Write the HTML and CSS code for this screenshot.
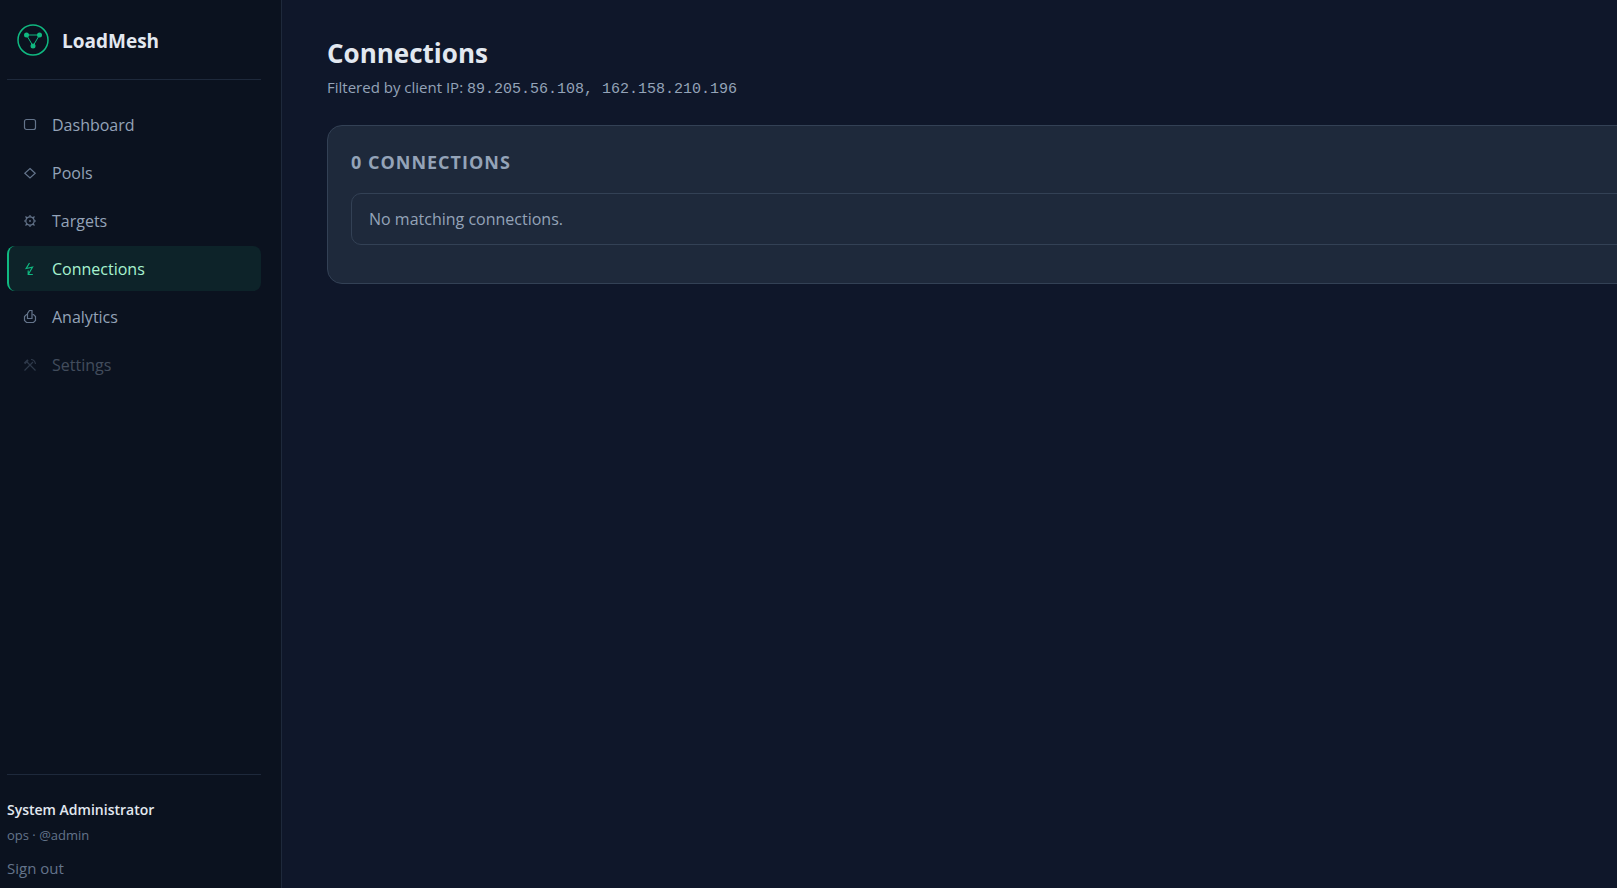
FILE: index.html
```
<!DOCTYPE html>
<html lang="en">
<head>
  <meta charset="UTF-8" />
  <meta name="viewport" content="width=device-width, initial-scale=1.0"/>
  <title>LoadMesh - Connections</title>
  <link rel="stylesheet" href="styles.css">
</head>
<body>
  <aside class="sidebar">
    <div class="brand">
      <svg class="brand-logo" viewBox="0 0 32 32" aria-hidden="true">
        <circle cx="16" cy="16" r="15" fill="none" stroke="currentColor" stroke-width="1.5"/>
        <path d="M9.5 11h13L16 22z" fill="none" stroke="currentColor" stroke-width="1"/>
        <circle cx="9.5" cy="11" r="2.5" fill="currentColor"/>
        <circle cx="22.5" cy="11" r="2.5" fill="currentColor"/>
        <circle cx="16" cy="22" r="2.5" fill="currentColor"/>
      </svg>
      <span class="brand-name">LoadMesh</span>
    </div>

    <nav class="nav">
      <a class="nav-item" href="#dashboard">
        <svg class="nav-icon" viewBox="0 0 14 14"><rect x="1.5" y="1.5" width="11" height="10" rx="2"/></svg>
        Dashboard
      </a>
      <a class="nav-item" href="#pools">
        <svg class="nav-icon" viewBox="0 0 14 14"><path d="M7 2.5l5.200 4.700L7 12 1.800 7.200z"/></svg>
        Pools
      </a>
      <a class="nav-item" href="#targets">
        <svg class="nav-icon" viewBox="0 0 14 14">
          <circle cx="7" cy="7" r="4.2"/>
          <path d="M7 1v1.800M7 11.200v1.800M1 7h1.800M11.200 7H13M2.500 2.500l1.500 1.500M10 10l1.500 1.500M2.500 11.500l1.500-1.500M10 4l1.500-1.500"/>
          <circle class="dot" cx="7" cy="7" r="0.900"/>
        </svg>
        Targets
      </a>
      <a class="nav-item active" href="#connections" aria-current="page">
        <svg class="nav-icon" viewBox="0 0 14 14"><path d="M6.500 1L3.200 6.500 9.500 5.200 5.500 12M9.800 12.500H5.200V8.500"/></svg>
        Connections
      </a>
      <a class="nav-item" href="#analytics">
        <svg class="nav-icon" viewBox="0 0 14 14"><path d="M4.500 4.500H3.500L1.500 6.500v4l2 2h7l2-2v-4l-2-2H9.500"/><path d="M4.500 8.500V3.500L6.500 .5h2.500v8z"/></svg>
        Analytics
      </a>
      <a class="nav-item disabled" aria-disabled="true">
        <svg class="nav-icon" viewBox="0 0 14 14"><path d="M4 4l8.500 8.500M10 4l-8.500 8.500M8 1.500c2 0 4 2 4.500 4.500"/><path class="head" d="M1.500 5.500l3.500-3.500"/></svg>
        Settings
      </a>
    </nav>

    <div class="user">
      <div class="user-name">System Administrator</div>
      <div class="user-role">ops · @admin</div>
      <button class="sign-out" type="button">Sign out</button>
    </div>
  </aside>

  <main class="content">
    <h1>Connections</h1>
    <p class="subtitle">Filtered by client IP: <code>89.205.56.108, 162.158.210.196</code></p>

    <section class="card">
      <h2>0 connections</h2>
      <div class="empty">No matching connections.</div>
    </section>
  </main>
</body>
</html>
```
FILE: styles.css
```
* { box-sizing: border-box; }
body {
  margin: 0;
  font-family: 'Segoe UI', 'Open Sans', sans-serif;
  font-size: 16px;
  line-height: 24px;
  background: #0f172a;
  color: #e2e8f0;
  display: flex;
  min-height: 100vh;
  overflow-x: hidden;
}
.sidebar {
  flex: 0 0 282px;
  display: flex;
  flex-direction: column;
  padding: 0 20px 8px 7px;
  background: #0b121f;
  border-right: 1px solid #1e293b;
}
.brand {
  display: flex;
  align-items: center;
  gap: 13px;
  height: 80px;
  padding-left: 10px;
  border-bottom: 1px solid #1e293b;
}
.brand-logo {
  width: 32px;
  height: 32px;
  color: #10b981;
}
.brand-name {
  padding-top: 2px;
  font-size: 19px;
  font-weight: 700;
}
.nav {
  display: flex;
  flex-direction: column;
  gap: 3px;
  padding-top: 22px;
}
.nav-item {
  display: flex;
  align-items: center;
  gap: 15px;
  height: 45px;
  padding-left: 14px;
  border-left: 2px solid transparent;
  border-radius: 8px;
  color: #94a3b8;
  text-decoration: none;
}
.nav-icon {
  width: 14px;
  height: 14px;
  fill: none;
  stroke: #64748b;
  stroke-width: 1.2;
}
.nav-icon .dot {
  fill: #64748b;
  stroke: none;
}
.nav-icon .head {
  stroke-width: 2;
}
.nav-item.active {
  background: #0d2329;
  border-left-color: #10b981;
  color: #a7f3d0;
}
.nav-item.active .nav-icon {
  stroke: #10b981;
}
.nav-item.disabled {
  opacity: 0.4;
}
.user {
  margin-top: auto;
  padding-top: 23px;
  border-top: 1px solid #1e293b;
}
.user-name {
  font-size: 14px;
  font-weight: 600;
}
.user-role {
  margin-top: 1px;
  font-size: 13px;
  color: #64748b;
}
.sign-out {
  display: block;
  margin-top: 9px;
  padding: 0;
  border: none;
  background: none;
  font: inherit;
  font-size: 15px;
  color: #64748b;
  cursor: pointer;
}
.content {
  flex: 1;
  min-width: 0;
  padding: 35px 0 36px 45px;
}
h1 {
  margin: 0;
  font-size: 26px;
  line-height: 36px;
  font-weight: 700;
}
.subtitle {
  margin: 4px 0 23px;
  font-size: 15px;
  color: #94a3b8;
}
.subtitle code {
  font-family: Consolas, 'Liberation Mono', monospace;
  font-size: 15px;
}
/* card runs past the right edge of the window */
.card {
  margin-right: -48px;
  padding: 24px 23px 38px;
  background: #1e293b;
  border: 1px solid #334155;
  border-radius: 15px;
}
h2 {
  margin: 0 0 18px;
  font-size: 18px;
  line-height: 25px;
  font-weight: 700;
  letter-spacing: 1px;
  text-transform: uppercase;
  color: #94a3b8;
}
.empty {
  padding: 13px 17px;
  border: 1px solid #334155;
  border-radius: 10px;
  color: #94a3b8;
}
```
